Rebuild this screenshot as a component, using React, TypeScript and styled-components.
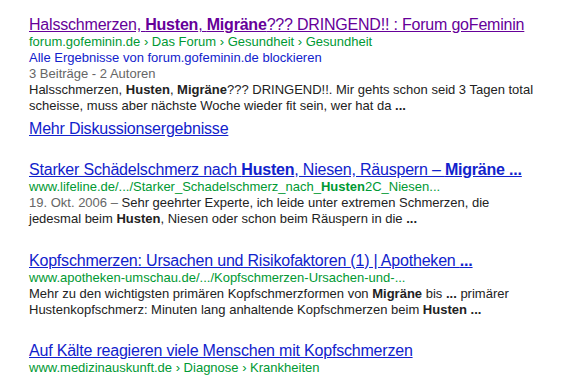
import React from "react";
import styled, { createGlobalStyle } from "styled-components";

const Global = createGlobalStyle`
  html, body { margin: 0; padding: 0; background: #fff; }
  body { font-family: "Liberation Sans", Arial, sans-serif; }
`;

const Page = styled.div`
  width: 586px;
  height: 377px;
  overflow: hidden;
  box-sizing: border-box;
  padding: 15px 0 0 29px;
`;

const List = styled.ol`
  list-style: none;
  margin: 0;
  padding: 0;
  width: 512px;
  display: flex;
  flex-direction: column;
`;

const Result = styled.li<{ $gap: number }>`
  margin: 0 0 ${(p) => p.$gap}px;
  padding: 0;
`;

const Title = styled.h3`
  margin: 0;
  font-size: 16px;
  font-weight: normal;
  line-height: 19px;
  letter-spacing: -0.2px;
  white-space: nowrap;
`;

const TitleLink = styled.a<{ $visited?: boolean }>`
  color: ${(p) => (p.$visited ? "#660099" : "#1122cc")};
  text-decoration: underline;
  cursor: pointer;
  b { font-weight: bold; }
`;

const Cite = styled.div`
  font-size: 13px;
  line-height: 16px;
  color: #009933;
  white-space: nowrap;
  b { font-weight: bold; }
`;

const Block = styled.div`
  font-size: 13px;
  line-height: 16px;
  color: #1122cc;
`;

const Meta = styled.div`
  font-size: 13px;
  line-height: 16px;
  color: #666666;
`;

const Snippet = styled.div`
  font-size: 13px;
  line-height: 16px;
  color: #222222;
  b { font-weight: bold; color: #222222; }
`;

const DateSpan = styled.span`
  color: #666666;
`;

const MoreLink = styled.a`
  display: block;
  margin-top: 5px;
  font-size: 16px;
  line-height: 19px;
  letter-spacing: -0.2px;
  color: #1122cc;
  text-decoration: underline;
`;

export default function App() {
  return (
    <>
      <Global />
      <Page>
        <List>
          <Result $gap={22}>
            <Title>
              <TitleLink $visited>
                Halsschmerzen, <b>Husten</b>, <b>Migräne</b>??? DRINGEND!! : Forum goFeminin
              </TitleLink>
            </Title>
            <Cite>forum.gofeminin.de › Das Forum › Gesundheit › Gesundheit</Cite>
            <Block>Alle Ergebnisse von forum.gofeminin.de blockieren</Block>
            <Meta>3 Beiträge - 2 Autoren</Meta>
            <Snippet>
              Halsschmerzen, <b>Husten</b>, <b>Migräne</b>??? DRINGEND!!. Mir gehts schon seid 3
              Tagen total scheisse, muss aber nächste Woche wieder fit sein, wer hat da <b>...</b>
            </Snippet>
            <MoreLink>Mehr Diskussionsergebnisse</MoreLink>
          </Result>
          <Result $gap={24}>
            <Title>
              <TitleLink>
                Starker Schädelschmerz nach <b>Husten</b>, Niesen, Räuspern – <b>Migräne ...</b>
              </TitleLink>
            </Title>
            <Cite>
              www.lifeline.de/.../Starker_Schadelschmerz_nach_<b>Husten</b>2C_Niesen...
            </Cite>
            <Snippet>
              <DateSpan>19. Okt. 2006 – </DateSpan>Sehr geehrter Experte, ich leide unter extremen
              Schmerzen, die jedesmal beim <b>Husten</b>, Niesen oder schon beim Räuspern in die{" "}
              <b>...</b>
            </Snippet>
          </Result>
          <Result $gap={23}>
            <Title>
              <TitleLink>
                Kopfschmerzen: Ursachen und Risikofaktoren (1) | Apotheken <b>...</b>
              </TitleLink>
            </Title>
            <Cite>www.apotheken-umschau.de/.../Kopfschmerzen-Ursachen-und-...</Cite>
            <Snippet>
              Mehr zu den wichtigsten primären Kopfschmerzformen von <b>Migräne</b> bis <b>...</b>{" "}
              primärer Hustenkopfschmerz: Minuten lang anhaltende Kopfschmerzen beim{" "}
              <b>Husten ...</b>
            </Snippet>
          </Result>
          <Result $gap={0}>
            <Title>
              <TitleLink>Auf Kälte reagieren viele Menschen mit Kopfschmerzen</TitleLink>
            </Title>
            <Cite>www.medizinauskunft.de › Diagnose › Krankheiten</Cite>
          </Result>
        </List>
      </Page>
    </>
  );
}
